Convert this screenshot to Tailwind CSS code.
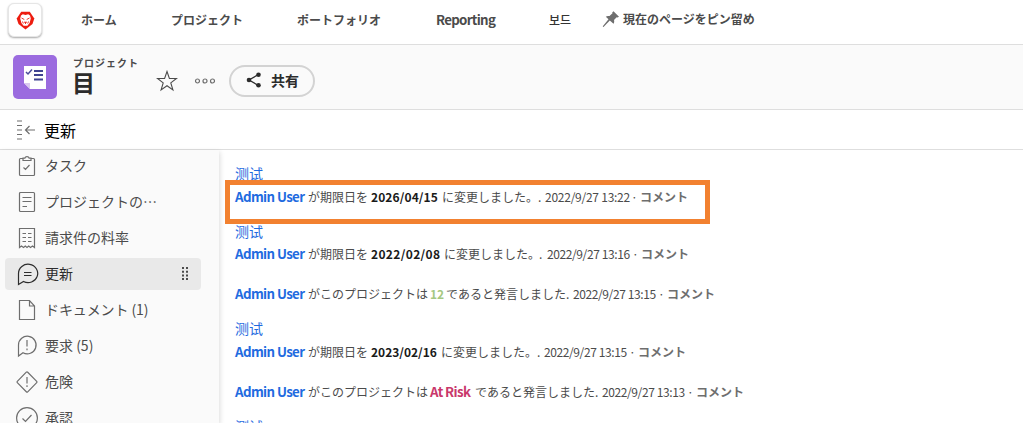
<!DOCTYPE html>
<html lang="ja">
<head>
<meta charset="utf-8">
<title>更新</title>
<script src="https://cdn.jsdelivr.net/npm/@tailwindcss/browser@4"></script>
</head>
<body class="w-[1023px] h-[423px] overflow-hidden bg-white font-['Noto_Sans_CJK_JP',sans-serif] text-[#4b4b4b] whitespace-nowrap">
<header class="h-[45px] border-b border-[#dedede] flex text-[12px] font-bold leading-[40px]">
  <div class="w-[81px] pl-2 pt-[3px]">
    <div class="size-[34px] rounded-[6px] bg-white border border-[#e6e6e6] shadow-[0_1px_2px_rgba(0,0,0,0.35)] flex items-center justify-center">
      <svg width="19" height="19" viewBox="0 0 19 19"><path d="M5.2 .8h8.6L18.3 7.5 16.5 13 9.5 18.500 2.500 13 .7 7.500z" fill="#ed1c0f"/><path d="M5 4.500l1.800-1.200 2.700.7 2.700-.7L14 4.500l.8 3-1.200 4.500-2.200 2.700H7.600L5.400 12 4.200 7.500z" fill="#fff"/><path d="M5.500 7l2.800 1.500M13.500 7l-2.800 1.500M8 11.200h3M9.500 11v2M6.500 10.500l.8 2M12.500 10.500l-.8 2" stroke="#ed1c0f" stroke-width=".9" fill="none"/></svg>
    </div>
  </div>
  <a class="w-[90px]">ホーム</a>
  <a class="w-[126px]">プロジェクト</a>
  <a class="w-[139px]">ポートフォリオ</a>
  <a class="w-[113px] text-[13.300px] tracking-[-0.7px]">Reporting</a>
  <a class="w-[53px] text-[12px] font-medium font-['Noto_Sans_CJK_KR',sans-serif] text-[#333]">보드</a>
  <a class="flex"><svg class="mt-[10px] mr-[3px] shrink-0" width="18" height="18" viewBox="0 0 18 18" fill="#6e6e6e"><path d="M11.500 1.200L17 6.700l-1.500.8-.8-.3-2.700 2.900c.4 1.600.2 2.700-.5 3.700L7.800 10.500 1.500 17l-.7-.3.200-.8 5.500-6.700L3.800 6.700c1.200-.9 2.300-1 3.700-.6l3-2.800-.3-.9z"/></svg><span class="-mt-px">現在のページをピン留め</span></a>
</header>
<section class="h-[65px] bg-[#fafafa] border-b border-[#dedede] flex">
  <div class="ml-[13px] mt-[10px] size-[44px] rounded-[5px] bg-[#9b6bdf] flex items-center justify-center shrink-0">
    <svg width="24" height="24" viewBox="0 0 24 24"><path d="M1 1h22v23H7L1 18z" fill="#fff"/><path d="M1 18h6v6z" fill="#d9c8ef"/><path d="M3 7l2 2 4-4.500" stroke="#4b4e9b" stroke-width="1.500" fill="none"/><path d="M11 6h9M11 10h9M11 14.500h9" stroke="#3f4390" stroke-width="2"/></svg>
  </div>
  <div class="ml-4 w-[83px] pt-[12px] font-bold">
    <div class="text-[10px] leading-[12px] tracking-[1px]">プロジェクト</div>
    <div class="-ml-px -mt-px text-[23px] leading-[28px] text-[#2c2c2c]">目</div>
  </div>
  <svg class="mt-[25px] shrink-0" width="22" height="22" viewBox="0 0 22 22" fill="none" stroke="#4b4b4b" stroke-width="1.100"><path d="M11 1.500l2.400 6.900 7.100.1-5.700 4.400 2.100 7L11 15.700l-5.900 4.200 2.100-7L1.500 8.500l7.100-.1z"/></svg>
  <svg class="mt-[32px] ml-[16px] shrink-0" width="22" height="8" viewBox="0 0 22 8" fill="none" stroke="#6e6e6e" stroke-width="1.200"><circle cx="3.500" cy="4" r="2"/><circle cx="11" cy="4" r="2"/><circle cx="18.500" cy="4" r="2"/></svg>
  <button class="mt-5 ml-[13px] w-[86px] h-[32px] rounded-full border-2 border-[#d3d3d3] flex items-center pl-[15px] text-[14px] font-bold text-[#2c2c2c]">
    <svg class="mr-[9px] mb-[2px]" width="16" height="16" viewBox="0 0 16 16" fill="#2c2c2c"><path d="M12.500 2.500L3 8l9.500 5.500" stroke="#2c2c2c" stroke-width="1.300" fill="none"/><circle cx="12.500" cy="2.700" r="2.300"/><circle cx="3" cy="8" r="2.300"/><circle cx="12.500" cy="13.300" r="2.300"/></svg><span class="pb-[2px]">共有</span></button>
</section>
<div class="h-[40px] border-b border-[#dedede] flex items-center pl-4 text-[16px] text-black">
  <svg class="mr-[9px]" width="19" height="20" viewBox="0 0 19 20" fill="none" stroke="#6e6e6e" stroke-width="1.200"><path d="M1 1h5M1 5.500h5M1 10h5M1 14.500h5M1 19h5M19 10H9.500M13.500 6l-4 4 4 4"/></svg>更新
</div>
<main class="flex h-[273px]">
  <nav class="w-[219px] bg-[#fafafa] shadow-[1px_2px_5px_rgba(0,0,0,0.14)] text-[14px] shrink-0 px-[5px] overflow-visible">
    <div class="h-[32px] flex items-center pl-[10px] gap-[6px]"><svg width="24" height="24" viewBox="0 0 24 24" fill="none" stroke="#6e6e6e" stroke-width="1.200"><path d="M8 4.500H5.500a1 1 0 0 0-1 1v15a1 1 0 0 0 1 1h13a1 1 0 0 0 1-1v-15a1 1 0 0 0-1-1H16M8 6.500V4.200h1.800a2.300 2.300 0 0 1 4.400 0H16v2.300zM8.500 13.500l2 2 4-4.500"/></svg><span class="pb-[2px]">タスク</span></div>
    <div class="mt-1 h-[32px] flex items-center pl-[10px] gap-[6px]"><svg width="24" height="24" viewBox="0 0 24 24" fill="none" stroke="#6e6e6e" stroke-width="1.200"><rect x="4.500" y="2.500" width="15" height="19" rx="1"/><path d="M7.500 7.500h9M7.500 11.500h9M7.500 16.500h4.500"/></svg><span class="pb-[2px]">プロジェクトの…</span></div>
    <div class="mt-1 h-[32px] flex items-center pl-[10px] gap-[6px]"><svg width="24" height="24" viewBox="0 0 24 24" fill="none" stroke="#6e6e6e" stroke-width="1.200"><path d="M4.500 21.500v-19h15v19l-2-1.500-2 1.500-1.800-1.500-1.700 1.500-1.700-1.500-1.800 1.500-2-1.500zM7.500 7.500h3.500M13 7.500h3.500M7.500 11.500h3.500M13 11.500h3.500M7.500 15.500h3.500M13 15.500h3.500"/></svg><span class="pb-[2px]">請求件の料率</span></div>
    <div class="mt-1 h-[32px] w-[196px] rounded-[4px] bg-[#e9e9e9] text-[#2c2c2c] flex items-center pl-[10px] gap-[6px]"><svg width="24" height="24" viewBox="0 0 24 24" fill="none" stroke="#2c2c2c" stroke-width="1.200"><path d="M3.500 22.500V11.500a9.600 9.200 0 1 1 5 8zM9 10.500h7.500M9 13.500h7.500"/></svg><span class="pb-[2px]">更新</span>
      <svg class="ml-auto mr-[12px]" width="8" height="14" viewBox="0 0 8 14" fill="#4b4b4b"><path d="M1 0h2v2H1zM5 0h2v2H5zM1 3.700h2v2H1zM5 3.700h2v2H5zM1 7.400h2v2H1zM5 7.400h2v2H5zM1 11.100h2v2H1zM5 11.100h2v2H5z"/></svg></div>
    <div class="mt-1 h-[32px] flex items-center pl-[10px] gap-[6px]"><svg width="24" height="24" viewBox="0 0 24 24" fill="none" stroke="#6e6e6e" stroke-width="1.200"><path d="M4.500 2.500h10l5 5.500v13.500h-15zM14.500 2.500V8h5"/></svg><span class="pb-[2px] tracking-[-0.1px]">ドキュメント (1)</span></div>
    <div class="mt-1 h-[32px] flex items-center pl-[10px] gap-[6px]"><svg width="24" height="24" viewBox="0 0 24 24" fill="none" stroke="#6e6e6e" stroke-width="1.200"><path d="M3.500 22V11a8.800 8.800 0 1 1 4.500 7.700zM12 6v6.500M12 14.500v1.800"/></svg><span class="pb-[2px]">要求 (5)</span></div>
    <div class="mt-1 h-[32px] flex items-center pl-[10px] gap-[6px]"><svg width="24" height="24" viewBox="0 0 24 24" fill="none" stroke="#6e6e6e" stroke-width="1.200"><path d="M11.300 2.200a1 1 0 0 1 1.400 0l9 9.100a1 1 0 0 1 0 1.400l-9 9.100a1 1 0 0 1-1.400 0l-9-9.100a1 1 0 0 1 0-1.400zM12 7v6.500M12 15.200V17"/></svg><span class="pb-[2px]">危険</span></div>
    <div class="mt-1 h-[32px] flex items-center pl-[10px] gap-[6px]"><svg width="24" height="24" viewBox="0 0 24 24" fill="none" stroke="#6e6e6e" stroke-width="1.200"><circle cx="12" cy="12" r="10.400"/><path d="M7.500 12.500l3 3 6-6.500"/></svg><span class="pb-[2px]">承認</span></div>
  </nav>
  <section class="flex-1 text-[12px] pt-[11px]">
    <div class="ml-4 h-[24px] leading-[24px] text-[14px] text-[#1f6be0] font-['Noto_Sans_CJK_SC',sans-serif]">测试</div>
    <div class="relative ml-4 h-[24px] flex items-baseline leading-[24px]">
      <div class="absolute -left-[10px] -top-[5px] w-[485px] h-[44px] border-[5px] border-[#f28130]"></div>
      <b class="w-[73px] text-[13.300px] tracking-[-0.6px] text-[#1f6be0]">Admin User</b><span class="w-[63px]">が期限日を</span><b class="w-[71px] text-[#1a1a1a] tracking-[0.1px]">2026/04/15</b><span class="w-[96px]">に変更しました。</span><span class="w-[7px]">.</span><span class="w-[86px] tracking-[-0.25px]">2022/9/27 13:22</span><span class="w-[9px]">·</span><b class="text-[#6e6e6e]">コメント</b>
    </div>
    <div class="ml-4 mt-[10px] h-[24px] leading-[24px] text-[14px] text-[#1f6be0] font-['Noto_Sans_CJK_SC',sans-serif]">测试</div>
    <div class="ml-4 h-[23px] flex items-baseline leading-[22px]">
      <b class="w-[73px] text-[13.300px] tracking-[-0.6px] text-[#1f6be0]">Admin User</b><span class="w-[63px]">が期限日を</span><b class="w-[73px] text-[#1a1a1a] tracking-[0.35px]">2022/02/08</b><span class="w-[95px]">に変更しました。</span><span class="w-[8px]">.</span><span class="w-[85px] tracking-[-0.4px]">2022/9/27 13:16</span><span class="w-[9px]">·</span><b class="text-[#6e6e6e]">コメント</b>
    </div>
    <div class="ml-4 mt-[17px] h-[23px] flex items-baseline leading-[22px]">
      <b class="w-[73px] text-[13.300px] tracking-[-0.6px] text-[#1f6be0]">Admin User</b><span class="w-[122px]">がこのプロジェクトは</span><b class="w-[16px] text-[#a5c882]">12</b><span class="w-[127px]">であると発言しました.</span><span class="w-[85px] tracking-[-0.4px]">2022/9/27 13:15</span><span class="w-[9px]">·</span><b class="text-[#6e6e6e]">コメント</b>
    </div>
    <div class="ml-4 mt-[10px] h-[24px] leading-[24px] text-[14px] text-[#1f6be0] font-['Noto_Sans_CJK_SC',sans-serif]">测试</div>
    <div class="ml-4 h-[24px] flex items-baseline leading-[23px]">
      <b class="w-[73px] text-[13.300px] tracking-[-0.6px] text-[#1f6be0]">Admin User</b><span class="w-[63px]">が期限日を</span><b class="w-[70px] text-[#1a1a1a]">2023/02/16</b><span class="w-[96px]">に変更しました。</span><span class="w-[7px]">.</span><span class="w-[85px] tracking-[-0.4px]">2022/9/27 13:15</span><span class="w-[9px]">·</span><b class="text-[#6e6e6e]">コメント</b>
    </div>
    <div class="ml-4 mt-[16px] h-[24px] flex items-baseline leading-[24px]">
      <b class="w-[73px] text-[13.300px] tracking-[-0.6px] text-[#1f6be0]">Admin User</b><span class="w-[122px]">がこのプロジェクトは</span><b class="w-[45px] text-[13.300px] tracking-[-0.6px] text-[#c9386b]">At Risk</b><span class="w-[127px]">であると発言しました.</span><span class="w-[85px] tracking-[-0.4px]">2022/9/27 13:13</span><span class="w-[9px]">·</span><b class="text-[#6e6e6e]">コメント</b>
    </div>
    <div class="ml-4 mt-[10px] h-[24px] leading-[24px] text-[14px] text-[#1f6be0] font-['Noto_Sans_CJK_SC',sans-serif]">测试</div>
  </section>
</main>
</body>
</html>
